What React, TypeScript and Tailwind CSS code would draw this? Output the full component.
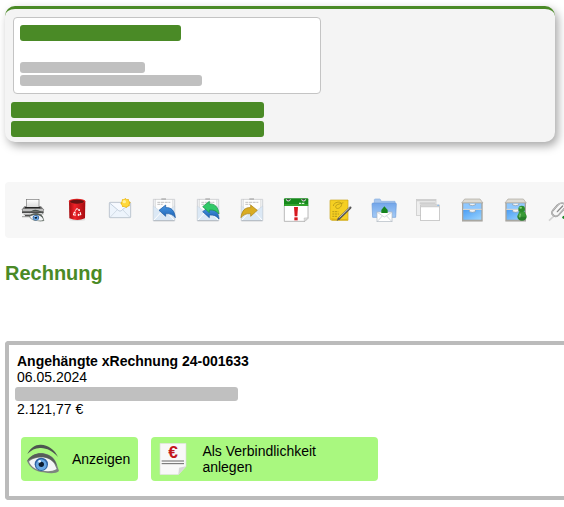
import React from 'react';

const replyArrow = 'M18 37 L38 21 L38 29 C54 27 65 38 67 59 C60 50 51 46 38 47 L38 55 Z';

const EyeShape: React.FC = () => (
  <>
    <path d="M1 33 C12 12 26 4 42 5 C62 6 84 20 93 42 C76 23 60 16 42 15 C26 14 14 20 1 33Z" fill="#4d5650" />
    <path d="M0 54 C12 36 30 29 48 31 C70 33 86 48 90 66 L96 84 C88 92 70 92 50 88 C26 86 8 74 0 54Z" fill="#7d867f" />
    <path d="M6 56 C20 40 66 36 82 62 L89 78 C76 86 60 85 46 83 C26 81 12 70 6 56Z" fill="#f4f5f7" />
    <path d="M0 54 C12 34 34 28 52 32 C72 36 86 50 90 70 C76 48 60 42 44 42 C26 42 14 46 0 54Z" fill="#565e59" />
    <circle cx="43" cy="64" r="20" fill="#2e63a3" />
    <circle cx="43" cy="65" r="16" fill="#6aa8e3" />
    <circle cx="43" cy="64" r="8" fill="#0c1c30" />
    <circle cx="38" cy="55" r="4" fill="#eaf6ff" />
  </>
);

const Letter: React.FC = () => (
  <>
    <path d="M1 4 H65 V68 H1Z" fill="#eceef0" stroke="#c3c6ca" strokeWidth="2" />
    <rect x="8" y="5" width="51" height="40" fill="#fdfdfd" stroke="#c4c4c4" />
    <path d="M25 3 H39" stroke="#999" strokeWidth="3" />
    <path d="M13 13 H52 M13 19 H29" stroke="#a3a3a3" strokeWidth="2" strokeDasharray="9 2" />
    <path d="M1 24 L33 48 L65 24 V68 H1Z" fill="#dbe8f5" stroke="#b9c4cf" />
    <path d="M2 67 L25 42 M64 67 L41 42" stroke="#fff" strokeWidth="3" />
    <path d="M1 68 H65" stroke="#a5a9ad" strokeWidth="2" />
  </>
);

const Cabinet: React.FC = () => (
  <>
    <path d="M10 3 H56 L65 15 H1Z" fill="#dedbd4" stroke="#aaa69f" strokeWidth="2" />
    <rect x="2" y="14" width="62" height="54" fill="#a8a49d" />
    <rect x="6" y="16" width="54" height="17" fill="#8fc8ff" />
    <rect x="6" y="36" width="54" height="29" fill="url(#drawer)" />
    <path d="M24 17 V21 Q33 25 42 21 V17 M24 36 V41 Q33 45 42 41 V36" fill="#f3f3f3" stroke="#8095aa" strokeWidth="2" />
    <path d="M5 34 H61" stroke="#ddd" strokeWidth="3" />
    <path d="M2 69 H64" stroke="#77746e" strokeWidth="2" />
  </>
);

const tools: { label: string; icon: React.ReactNode }[] = [
  {
    label: 'Druckansicht',
    icon: (
      <>
        <path d="M10 25 H60 L68 34 V46 H3 V34Z" fill="#777" />
        <rect x="16" y="4" width="38" height="27" fill="url(#paper)" stroke="#777" strokeWidth="2" />
        <path d="M12 29 H58" stroke="#222" strokeWidth="4" />
        <path d="M5 36 H66" stroke="#d4d4d4" strokeWidth="5" />
        <path d="M3 43 H67" stroke="#444" strokeWidth="3" />
        <path d="M8 50 H64 M3 56 H62" stroke="#aaa" strokeWidth="4" />
        <path d="M12 53 H30" stroke="#333" strokeWidth="3" />
        <g transform="translate(24 33) scale(0.48 0.41)"><EyeShape /></g>
      </>
    ),
  },
  {
    label: 'Löschen',
    icon: (
      <>
        <ellipse cx="37" cy="65" rx="24" ry="4" fill="#ddd" />
        <path d="M12 9 L13 61 Q37 71 60 61 L61 9Z" fill="url(#bin)" />
        <ellipse cx="36" cy="10" rx="25" ry="8" fill="#d22" />
        <ellipse cx="36" cy="11" rx="21" ry="6" fill="#671313" />
        <path d="M31 38 L36 31 L42 37 M45 42 L48 50 L40 51 M33 51 H25 L28 43" fill="none" stroke="#fff" strokeWidth="3" />
        <path d="M39 38 L45 39 L44 32Z M42 46 L37 51 L42 55Z M25 43 L31 40 L32 47Z" fill="#fff" />
      </>
    ),
  },
  {
    label: 'Als ungelesen markieren',
    icon: (
      <>
        <rect x="1" y="13" width="64" height="46" rx="2" fill="#edf4fc" stroke="#bdc6d0" strokeWidth="3" />
        <path d="M4 57 L25 35 M62 57 L41 35" stroke="#c3cedb" strokeWidth="2" />
        <path d="M3 16 L29 38 Q33 41 37 38 L63 16" fill="#f7faff" stroke="#a9bacd" strokeWidth="2" />
        <path d="M49 0 L53 4 L59 3 L60 9 L65 13 L62 18 L62 24 L56 26 L52 30 L47 27 L40 27 L38 21 L34 16 L38 11 L39 4 L45 4Z" fill="#e9b71d" />
        <circle cx="49" cy="15" r="11" fill="#ffd83b" />
        <circle cx="46" cy="11" r="5" fill="#fff09a" />
      </>
    ),
  },
  {
    label: 'Antworten',
    icon: (
      <>
        <Letter />
        <path d={replyArrow} fill="url(#blue)" stroke="#1756a0" strokeWidth="2" />
      </>
    ),
  },
  {
    label: 'Allen antworten',
    icon: (
      <>
        <Letter />
        <path d={replyArrow} transform="translate(-1 4)" fill="url(#blue)" stroke="#1756a0" strokeWidth="2" />
        <path d={replyArrow} transform="translate(-1 -11)" fill="#31c968" stroke="#159142" strokeWidth="2" />
      </>
    ),
  },
  {
    label: 'Weiterleiten',
    icon: (
      <>
        <Letter />
        <path d={replyArrow} transform="translate(67 0) scale(-1 1)" fill="#d9ac23" stroke="#a77d0e" strokeWidth="2" />
      </>
    ),
  },
  {
    label: 'Wiedervorlage',
    icon: (
      <>
        <path d="M-2 22 H69 V61 L60 70 H-2Z" fill="#fff" stroke="#999" strokeWidth="2" />
        <path d="M69 59 L57 60 L58 70Z" fill="#ddd" stroke="#aaa" />
        <path d="M-3 4 Q-3 1 0 1 H67 Q70 1 70 4 V24 H-3Z" fill="#16891b" />
        <path d="M-2 21 H69" stroke="#3cad35" strokeWidth="4" />
        <path d="M4 4 Q4 9 10 9 Q16 9 16 4 M50 4 Q50 9 56 9 Q62 9 62 4" fill="#444" stroke="#e4e4e4" strokeWidth="3" />
        <path d="M42 16 H59" stroke="#d7f5d7" strokeWidth="4" strokeDasharray="7 2" />
        <path d="M27 27 H39 L37 55 H29Z" fill="#d71920" />
        <rect x="28" y="58" width="10" height="9" fill="#d71920" />
      </>
    ),
  },
  {
    label: 'Notiz',
    icon: (
      <>
        <path d="M3 8 Q3 6 5 6 H57 V67 H9 Q3 67 3 61Z" fill="#f5cf22" stroke="#c9a31b" strokeWidth="2" />
        <path d="M6 61 Q30 64 56 62 V67 H9Z" fill="#dfb313" />
        <path d="M13 24 C14 12 34 9 37 16 C42 26 23 38 20 27 C19 19 31 19 43 14" fill="none" stroke="#a68b16" strokeWidth="2" />
        <path d="M10 41 H28 M10 48 H30 M10 55 H25" stroke="#9c8315" strokeWidth="2" strokeDasharray="6 2" />
        <path d="M64 29 L30 62" stroke="#555" strokeWidth="7" strokeLinecap="round" />
        <path d="M62 29 L31 59" stroke="#bcbcbc" strokeWidth="3" />
        <path d="M27 59 L32 64 L23 69Z" fill="#555" />
      </>
    ),
  },
  {
    label: 'In Ordner verschieben',
    icon: (
      <>
        <path d="M4 12 V5 Q4 3 7 3 H20 Q23 3 24 10 H66 V22 H4Z" fill="#a7c6ee" stroke="#89afe0" strokeWidth="2" />
        <path d="M-3 18 Q-3 15 0 15 H67 Q70 15 70 18 L68 58 H-1Z" fill="url(#folder)" stroke="#6d9bd8" strokeWidth="2" />
        <rect x="12" y="42" width="45" height="29" fill="#fff" stroke="#aeb7c0" strokeWidth="2" />
        <path d="M13 43 L34 57 L56 43 M13 70 L28 54 M56 70 L41 54" fill="none" stroke="#bbc3cc" strokeWidth="2" />
        <path d="M34 25 L44 36 V45 H25 V36Z" fill="#16841e" />
      </>
    ),
  },
  {
    label: 'Kopieren',
    icon: (
      <>
        <rect x="-2" y="4" width="59" height="48" fill="#eee" stroke="#c5c5c5" strokeWidth="2" />
        <path d="M-2 7 H57 M8 16 H55" stroke="#cfcfcf" strokeWidth="6" />
        <rect x="11" y="21" width="56" height="47" fill="#fff" stroke="#b5b5b5" strokeWidth="2" />
        <path d="M11 25 H67" stroke="#d0d0d0" strokeWidth="6" />
        <path d="M61 22 H66" stroke="#8bbef0" strokeWidth="4" />
      </>
    ),
  },
  { label: 'Archiv', icon: <g transform="translate(1 0)"><Cabinet /></g> },
  {
    label: 'Kundenarchiv',
    icon: (
      <>
        <g transform="translate(-1 0)"><Cabinet /></g>
        <ellipse cx="51" cy="56" rx="14" ry="12" fill="#287f2b" />
        <path d="M42 41 H60 L63 56 H38Z" fill="#389a36" />
        <circle cx="50" cy="33" r="10" fill="#2b8c2b" />
        <ellipse cx="47" cy="29" rx="4" ry="3" fill="#8bd57c" />
        <path d="M46 47 L44 58" stroke="#86c676" strokeWidth="4" />
      </>
    ),
  },
  {
    label: 'Anhang',
    icon: (
      <>
        <path d="M0 68 L15 54" stroke="#d2d2d2" strokeWidth="5" />
        <g fill="none" strokeLinecap="round">
          <path d="M45 17 L39 15 Q31 15 25 22 L12 37 C3 49 19 61 29 51 L48 30" stroke="#929292" strokeWidth="5" />
          <path d="M44 16 L39 15 Q31 15 25 22 L12 37 C3 49 19 61 29 51 L48 30" stroke="#dcdcdc" strokeWidth="2" />
          <path d="M41 24 L25 41" stroke="#888" strokeWidth="4" />
        </g>
        <circle cx="45" cy="58" r="5" fill="#198929" />
      </>
    ),
  },
];

const Header: React.FC = () => (
  <header className="ml-[5px] mr-[9px] rounded-[10px] border-t-3 border-[#4a8a26] bg-[#f4f4f4] px-1.5 pt-2 pb-[5px] shadow-[3px_4px_10px_rgba(0,0,0,0.35)]">
    <div className="px-0.5">
      <div className="w-[308px] rounded-[4px] border border-[#c4c4c4] bg-white px-1.5 py-[7px]">
        <div className="h-4 w-[161px] rounded-[3px] bg-[#4a8a26]" />
        <div className="mt-[21px] h-[11px] w-[125px] rounded-[3px] bg-[#c0c0c0]" />
        <div className="mt-0.5 h-[11px] w-[182px] rounded-[3px] bg-[#c0c0c0]" />
      </div>
    </div>
    <div className="mt-2 h-4 w-[253px] rounded-[3px] bg-[#4a8a26]" />
    <div className="mt-[3px] h-4 w-[253px] rounded-[3px] bg-[#4a8a26]" />
  </header>
);

const Toolbar: React.FC = () => (
  <nav aria-label="Aktionen" className="mt-10 ml-[5px] flex h-14 items-center gap-5 overflow-hidden rounded-l-[4px] bg-[#f7f7f7] px-4">
    {tools.map((tool) => (
      <button key={tool.label} type="button" aria-label={tool.label} title={tool.label} className="size-6 shrink-0 cursor-pointer">
        <svg viewBox="0 0 72 72" className="size-6 overflow-visible" aria-hidden="true">{tool.icon}</svg>
      </button>
    ))}
  </nav>
);

const Gradients: React.FC = () => (
  <svg className="absolute size-0" aria-hidden="true">
    <defs>
      <linearGradient id="paper" x1="0" y1="0" x2="0" y2="1">
        <stop stopColor="#fff" />
        <stop offset="1" stopColor="#d5d5d5" />
      </linearGradient>
      <linearGradient id="bin">
        <stop stopColor="#a50c10" />
        <stop offset="0.35" stopColor="#ef2329" />
        <stop offset="1" stopColor="#a50c10" />
      </linearGradient>
      <linearGradient id="blue" x1="0" y1="0" x2="0" y2="1">
        <stop stopColor="#4b9ae5" />
        <stop offset="1" stopColor="#1c62b5" />
      </linearGradient>
      <linearGradient id="folder" x1="0" y1="0" x2="0" y2="1">
        <stop stopColor="#72a6ea" />
        <stop offset="1" stopColor="#a4cbf7" />
      </linearGradient>
      <linearGradient id="drawer" x1="0" y1="0" x2="1" y2="1">
        <stop stopColor="#4c9ef4" />
        <stop offset="1" stopColor="#9bd5ff" />
      </linearGradient>
    </defs>
  </svg>
);

const App: React.FC = () => {
  return (
    <div className="overflow-hidden bg-white pt-1.5 pb-2 font-['Liberation_Sans',Arial,sans-serif] text-sm leading-4 text-black">
      <Gradients />
      <Header />
      <Toolbar />

      <main className="pl-[5px]">
        <h1 className="mt-[23px] text-xl leading-6 font-bold text-[#4a8a26]">Rechnung</h1>

        <section className="mt-14 rounded-l-[4px] border-4 border-r-0 border-[#bbb] px-1.5 pt-2 pb-[15px]">
          <div className="px-0.5">
            <h2 className="font-bold">Angehängte xRechnung 24-001633</h2>
            <p>06.05.2024</p>
          </div>
          <div className="mt-0.5 h-3.5 w-[223px] rounded-[3px] bg-[#c0c0c0]" />
          <p className="px-0.5">2.121,77 €</p>

          <div className="mt-5 flex gap-[13px] px-1.5">
            <button type="button" className="flex h-11 cursor-pointer items-center gap-[13px] rounded-[4px] bg-[#a9f87f] pr-2 pl-1.5 text-left">
              <svg viewBox="0 0 96 96" className="size-8 shrink-0" aria-hidden="true"><EyeShape /></svg>
              Anzeigen
            </button>
            <button type="button" className="flex h-11 w-[227px] cursor-pointer items-center gap-[13px] rounded-[4px] bg-[#a9f87f] pr-4 pl-1.5 text-left">
              <svg viewBox="0 0 96 96" className="size-8 shrink-0" aria-hidden="true">
                <path d="M9 1 H87 V70 L64 95 H9Z" fill="#f8f8f8" stroke="#d9ddd6" strokeWidth="2" />
                <path d="M87 70 L66 74 L64 95Z" fill="#d6d6d6" />
                <path d="M14 54 H81 M14 62 H81" stroke="#666" strokeWidth="3" />
                <text x="48" y="44" textAnchor="middle" fontSize="52" fontWeight="bold" fill="#c3161c">€</text>
              </svg>
              <span>Als Verbindlichkeit anlegen</span>
            </button>
          </div>
        </section>
      </main>
    </div>
  );
};

export default App;
